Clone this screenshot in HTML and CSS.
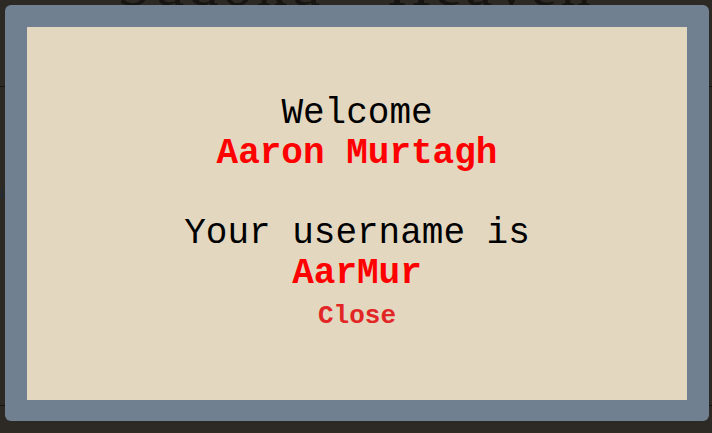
FILE: index.html
```html
<!DOCTYPE html>
<html lang="en">
<head>
<meta charset="utf-8">
<title>Welcome</title>
<link rel="stylesheet" href="styles.css">
</head>
<body>
  <div class="page">
    <h1 class="title">Sudoku &bull; Heaven</h1>
    <div class="rule"></div>
    <p class="intro">Menu</p>
    <div class="rule bottom"></div>
  </div>
  <div class="overlay">
    <div class="modal">
      <div class="panel">
        <div class="msg">
          <div class="line">Welcome</div>
          <div class="line name">Aaron Murtagh</div>
          <div class="line blank"></div>
          <div class="line">Your username is</div>
          <div class="line name">AarMur</div>
        </div>
        <button class="close" type="button">Close</button>
      </div>
    </div>
  </div>
</body>
</html>
```
FILE: styles.css
```css
html, body {
  margin: 0;
  padding: 0;
  height: 100%;
}
body {
  background: #2d2a25;
  font-family: "Liberation Serif", serif;
  overflow: hidden;
}
.page {
  display: flex;
  flex-direction: column;
}
.title {
  margin: -43px 0 0 0;
  height: 56px;
  text-align: center;
  font-size: 60px;
  line-height: 56px;
  font-weight: normal;
  color: #171512;
  letter-spacing: 4px;
}
.rule {
  margin-top: 73px;
  height: 1px;
  background: #16140f;
}
.intro {
  margin: 96px 0 0 -36px;
  height: 20px;
  line-height: 20px;
  font-family: "Liberation Sans", sans-serif;
  font-size: 16px;
  color: #1c2a3a;
}
.rule.bottom {
  margin-top: 202px;
}
.overlay {
  position: fixed;
  left: 5px;
  top: 5px;
  width: 704px;
  height: 416px;
}
.modal {
  box-sizing: border-box;
  width: 100%;
  height: 100%;
  padding: 22px 22px 21px 22px;
  background: #708090;
  border-radius: 6px;
}
.panel {
  height: 100%;
  background: #e3d7c0;
  display: flex;
  flex-direction: column;
  align-items: center;
  justify-content: center;
  text-align: center;
  font-family: "Liberation Mono", "Courier New", monospace;
  font-size: 36px;
  line-height: 40px;
  color: #000;
}
.line {
  height: 40px;
  white-space: pre;
}
.name {
  color: #ff0000;
  font-weight: bold;
}
.close {
  margin: 0;
  padding: 0;
  border: none;
  background: none;
  height: 40px;
  font-family: "Liberation Mono", "Courier New", monospace;
  font-size: 26px;
  line-height: 44px;
  font-weight: bold;
  color: #e22525;
  cursor: pointer;
}
```
